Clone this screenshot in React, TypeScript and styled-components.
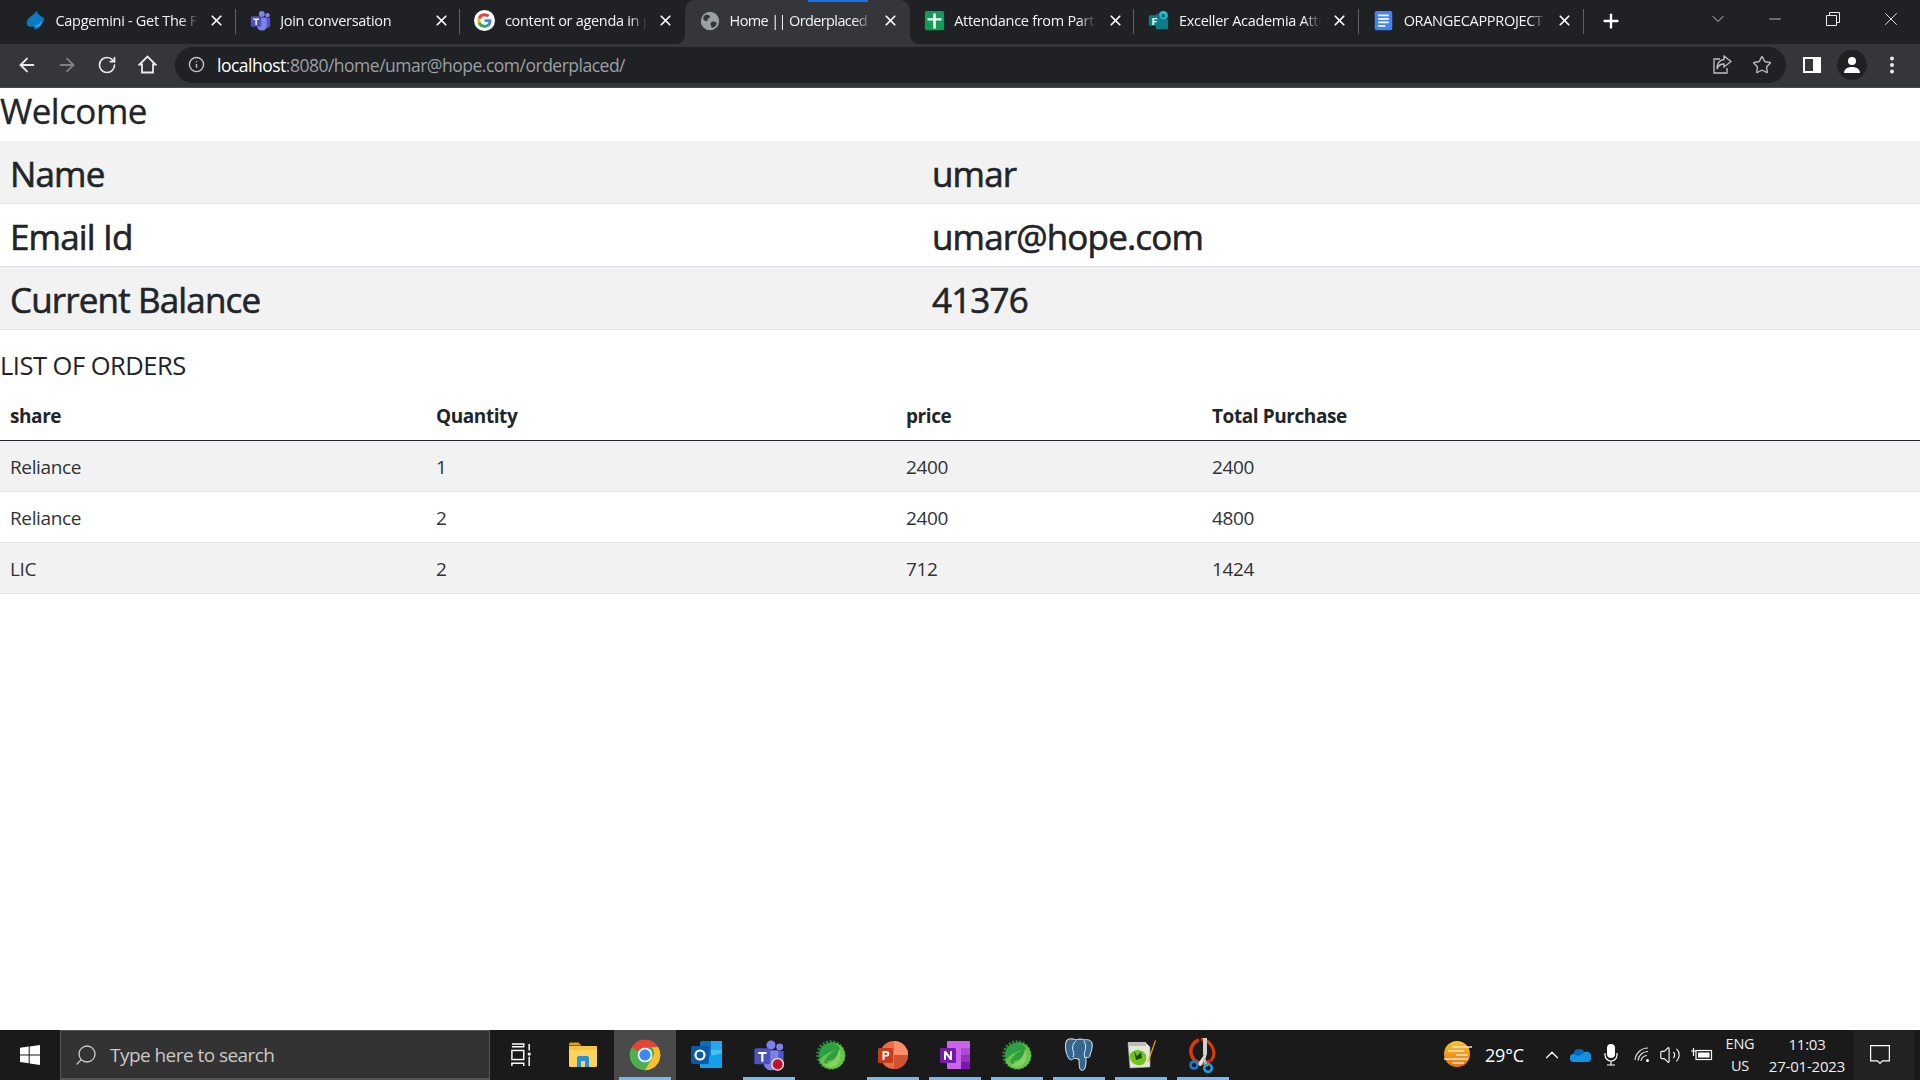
import React from 'react';
import styled, { createGlobalStyle } from 'styled-components';
import { ArrowLeft, ArrowRight, RotateCw, Info, Star, ChevronDown, ChevronUp, Minus, X, Plus, Search, Volume2 } from 'lucide-react';

const Global = createGlobalStyle`
  html, body { margin: 0; padding: 0; height: 100%; background: #fff; overflow: hidden; }
  #root { height: 100%; }
  * { box-sizing: border-box; }
`;
const FONT = `"Open Sans", "Noto Sans", "Liberation Sans", sans-serif`;

const Page = styled.div`
  width: 1920px; height: 1080px; display: flex; flex-direction: column;
  font-family: ${FONT}; color: #212529; background: #fff; overflow: hidden;
`;
const TabStrip = styled.div`
  height: 44px; background: #202124; display: flex; align-items: stretch; padding-left: 11px; position: relative;
`;
const Tab = styled.div<{ $active?: boolean; $sep?: boolean }>`
  width: 224.7px; flex: none; height: 44px; position: relative; display: flex; align-items: center;
  padding: 0 0 3px 14px; color: #e8eaed; border-radius: 10px 10px 0 0;
  background: ${p => (p.$active ? '#35363a' : 'transparent')};
  &::after {
    content: ''; display: ${p => (p.$sep ? 'block' : 'none')}; position: absolute; right: 0; top: 9px; width: 1px; height: 25px; background: #5f6368;
  }
`;
const Flare = styled.span<{ $side: 'left' | 'right' }>`
  position: absolute; bottom: 0; width: 10px; height: 10px;
  ${p => (p.$side === 'left' ? 'left: -10px;' : 'right: -10px;')}
  background: radial-gradient(circle at ${p => (p.$side === 'left' ? '0 0' : '100% 0')}, transparent 10px, #35363a 10.5px);
`;
const Favicon = styled.span`
  width: 21px; height: 21px; flex: none; display: flex; align-items: center; justify-content: center;
`;
const TabTitle = styled.span<{ $tight?: boolean }>`
  margin-left: 9.5px; width: 142px; font-size: 14.5px; letter-spacing: ${p => (p.$tight ? '-0.62px' : '-0.3px')}; white-space: nowrap; overflow: hidden; color: #f1f3f4;
  -webkit-mask-image: linear-gradient(90deg, #000 88%, transparent 100%);
  mask-image: linear-gradient(90deg, #000 88%, transparent 100%);
`;
const TabClose = styled.span`
  margin-left: 10.5px; display: flex; color: #fff;
`;
const LoadBar = styled.span`
  position: absolute; top: 0; left: 123px; width: 60px; height: 2px; background: #1a73e8;
`;
const NewTab = styled.span`
  margin-left: 16px; padding-bottom: 3px; display: flex; align-items: center; color: #fff;
`;
const WinControls = styled.div`
  margin-left: auto; display: flex; align-items: flex-start; color: #e8eaed;
`;
const WinButton = styled.span<{ $w: number }>`
  width: ${p => p.$w}px; height: 38px; display: flex; align-items: center; justify-content: center;
`;
const Toolbar = styled.div`
  height: 44px; background: #35363a; display: flex; align-items: center; padding: 0 0 2px 7px; color: #e8eaed; border-bottom: 1px solid #4a4b4f;
`;
const NavButton = styled.span<{ $dim?: boolean }>`
  width: 40px; height: 36px; flex: none; display: flex; align-items: center; justify-content: center;
  color: ${p => (p.$dim ? '#7f8185' : '#e8eaed')};
`;
const Omnibox = styled.div`
  margin-left: 8px; width: 1611px; flex: none; height: 36px; border-radius: 18px; background: #202124; display: flex; align-items: center; padding-left: 13px;
`;
const Url = styled.div`
  margin-left: 12px; font-size: 17.5px; letter-spacing: -0.5px; color: #9aa0a6; white-space: nowrap;
  b { font-weight: 400; color: #fff; }
`;
const OmniRight = styled.div`
  margin-left: auto; display: flex; align-items: center; gap: 20px; padding-right: 14px; color: #bdc1c6;
`;
const ToolRight = styled.div`
  display: flex; align-items: center; margin-left: 6px;
`;
const Avatar = styled.span`
  width: 30px; height: 30px; border-radius: 50%; background: #202124; display: flex; align-items: center; justify-content: center;
`;
const Content = styled.main`
  flex: 1; min-height: 0;
`;
const Welcome = styled.h2`
  margin: 0; height: 53px; font-size: 35px; font-weight: 400; line-height: 46px; letter-spacing: -0.55px; -webkit-text-stroke: 0.3px #212529;
`;
const Table = styled.table`
  width: 100%; border-collapse: separate; border-spacing: 0; table-layout: fixed;
`;
const Row = styled.tr<{ $striped?: boolean }>`
  background: ${p => (p.$striped ? '#f2f2f2' : '#fff')};
`;
const BigCell = styled.td`
  height: 63px; padding: 2px 10px 0; font-size: 35px; font-weight: 400; letter-spacing: -0.85px; line-height: 1; vertical-align: middle;
  border-bottom: 1px solid #dee2e6; -webkit-text-stroke: 0.6px #212529;
`;
const ListTitle = styled.h4`
  margin: 0; height: 62px; padding-top: 18px; font-size: 25.5px; font-weight: 400; line-height: 34px; letter-spacing: -0.5px;
`;
const Th = styled.th<{ $w?: number }>`
  height: 49px; padding: 0 10px; text-align: left; font-size: 19px; font-weight: 700; letter-spacing: -0.42px;
  width: ${p => (p.$w ? `${p.$w}px` : 'auto')}; border-bottom: 1px solid #212529;
`;
const Td = styled.td`
  height: 51px; padding: 2px 10px 0; font-size: 19px; letter-spacing: -0.38px; font-weight: 400; color: #2f3336;
  border-bottom: 1px solid #dee2e6;
`;
const Taskbar = styled.footer`
  height: 50px; flex: none; background: #1a1a1a; display: flex; align-items: stretch; color: #fff;
`;
const StartButton = styled.span`
  width: 60px; display: flex; align-items: center; justify-content: center;
`;
const SearchBox = styled.div`
  width: 430px; background: #333; border: 1px solid #555; border-bottom-width: 2px; display: flex; align-items: center; padding-left: 13px; color: #ccc;
`;
const SearchText = styled.span`
  margin-left: 12px; font-size: 19px; letter-spacing: -0.55px; color: #c8c8c8;
`;
const TaskSlot = styled.span<{ $active?: boolean; $run?: boolean }>`
  width: 62px; flex: none; position: relative; display: flex; align-items: center; justify-content: center;
  background: ${p => (p.$active ? '#4a4a4a' : 'transparent')};
  &::after {
    content: ''; display: ${p => (p.$run ? 'block' : 'none')}; position: absolute; bottom: 0; left: 5px; right: 5px; height: 3px; background: #76b9ed;
  }
`;
const Tray = styled.div`
  margin-left: auto; display: flex; align-items: center;
`;
const Temp = styled.span`
  margin-left: 11px; font-size: 18px; letter-spacing: -0.2px; width: 49px; color: #fff;
`;
const TrayIcon = styled.span<{ $w: number }>`
  width: ${p => p.$w}px; display: flex; justify-content: center; align-items: center; color: #fff;
`;
const Lang = styled.div`
  width: 40px; text-align: center; font-size: 14.5px; line-height: 22px; letter-spacing: -0.2px; color: #eee;
`;
const Clock = styled.div`
  width: 94px; text-align: center; font-size: 15px; line-height: 22px; letter-spacing: -0.2px; color: #eee;
`;
const Notify = styled.span`
  width: 60px; height: 50px; background: #222; display: flex; align-items: center; justify-content: center; padding-right: 8px;
`;
const Edge = styled.span`
  width: 6px; border-left: 1px solid #555;
`;

const ICapgemini = () => (
  <svg width="21" height="21" viewBox="0 0 24 24">
    <path d="M13 1C10 6 3 8 2 14c-.5 4 3 6 7 5 2-.5 2 1 1 3 3 0 5-1 7-3 3-3 5-8 5-10-3-1-7-4-9-8z" fill="#0b7ac0" />
    <path d="M10 18c3 0 7-2 9-6 1 3-1 6-4 7-2 .5-4 .3-5-1z" fill="#2ea6dc" />
  </svg>
);
const ITeams = ({ s = 21, badge = false }: { s?: number; badge?: boolean }) => (
  <svg width={s} height={s} viewBox="0 0 24 24">
    <circle cx="20" cy="6" r="2.6" fill="#7b83eb" />
    <circle cx="13.5" cy="4.5" r="3.4" fill="#7b83eb" />
    <path d="M16 9h7v8c0 2-2 3.5-3.5 3.5S16 19 16 17z" fill="#5059c9" />
    <path d="M8 8.5h11v10c0 3-2.5 5-5.500 5S8 21 8 18z" fill="#7b83eb" />
    <rect x="1" y="7" width="12" height="12" rx="1.5" fill="#4b53bc" />
    <path d="M3.800 9.800h6.400v1.500H7.800V17H6.200v-5.700H3.800z" fill="#fff" />
    {badge && <circle cx="18.500" cy="19" r="4.300" fill="#c50f2b" stroke="#eee" strokeWidth="1" />}
  </svg>
);
const IGoogle = () => (
  <svg width="21" height="21" viewBox="0 0 24 24">
    <circle cx="12" cy="12" r="12" fill="#fff" />
    <path d="M20 12.200c0-.6-.05-1.100-.15-1.600H12v3.100h4.500a3.900 3.900 0 0 1-1.650 2.500v2.100h2.700c1.550-1.450 2.450-3.550 2.450-6.100z" fill="#4285f4" />
    <path d="M12 20.300c2.250 0 4.150-.75 5.550-2l-2.700-2.100c-.75.5-1.700.8-2.850.8-2.200 0-4-1.450-4.700-3.450H4.500v2.150A8.300 8.300 0 0 0 12 20.300z" fill="#34a853" />
    <path d="M7.300 13.550a5 5 0 0 1 0-3.150v-2.100H4.500a8.300 8.300 0 0 0 0 7.400z" fill="#fbbc05" />
    <path d="M12 7c1.250 0 2.350.45 3.250 1.300l2.400-2.400C16.150 4.500 14.250 3.700 12 3.700a8.300 8.300 0 0 0-7.500 4.600l2.800 2.150C8 8.450 9.800 7 12 7z" fill="#ea4335" />
  </svg>
);
const IGlobe = () => (
  <svg width="20" height="20" viewBox="0 0 24 24">
    <circle cx="12" cy="12" r="11" fill="#9aa0a6" />
    <path d="M6 5c3-1 6 0 6 2s-3 1.500-3 4-4 1-5-1c-.5-2 .5-4 2-5zM14 13c3-1 6 0 6 2s-3 5-5 5-1-2-2-3 0-3 1-4z" fill="#35363a" />
  </svg>
);
const ISheets = () => (
  <svg width="21" height="21" viewBox="0 0 24 24">
    <rect x="1" y="1" width="22" height="22" rx="2" fill="#0f9d58" />
    <path d="M10.500 4h3v5.500H20v2.500h-6.500V21h-3v-9H4V9.500h6.500z" fill="#fff" />
  </svg>
);
const IForms = () => (
  <svg width="21" height="21" viewBox="0 0 24 24">
    <circle cx="17.500" cy="6" r="5" fill="#37c6d0" />
    <rect x="9" y="4" width="14" height="9" fill="#28a8ea" opacity=".4" />
    <rect x="9" y="11" width="14" height="11" rx="1" fill="#0f7b83" />
    <rect x="1" y="6" width="13" height="12" rx="1.500" fill="#038387" />
    <path d="M5 9h5.500v1.700H7v1.800h3v1.600H7V17H5z" fill="#fff" />
    <circle cx="17.500" cy="6.500" r="2.500" fill="#0f7b83" />
  </svg>
);
const IDocs = () => (
  <svg width="21" height="21" viewBox="0 0 24 24">
    <rect x="2" y="1" width="20" height="22" rx="2" fill="#4285f4" />
    <path d="M6 7h12M6 11h12M6 15h12M6 19h8" stroke="#fff" strokeWidth="2" transform="translate(0 -1)" />
  </svg>
);
const IWindows = () => (
  <svg width="20" height="20" viewBox="0 0 20 20" fill="#fff">
    <path d="M0 2.800 8.700 1.600v7.800H0zM9.700 1.400 20 0v9.400H9.700zM0 10.400h8.700v7.900L0 17.100zM9.700 10.400H20V20L9.700 18.500z" />
  </svg>
);
const ITaskView = () => (
  <svg width="20" height="24" viewBox="0 0 22 26" fill="none" stroke="#fff" strokeWidth="1.600">
    <path d="M1 1h13v3H1M1 25v-3h13v3" />
    <rect x="1" y="8" width="13" height="10" />
    <path d="M20 1v7M20 15v10" />
    <rect x="18.500" y="10.500" width="3" height="3" fill="#fff" stroke="none" />
  </svg>
);
const IExplorer = () => (
  <svg width="28" height="28" viewBox="0 0 28 28">
    <path d="M0 3a1.500 1.500 0 0 1 1.500-1.500h8l3 3H0z" fill="#e0a10e" />
    <rect x="0" y="5" width="28" height="21" rx="1.500" fill="#fcd35c" />
    <rect x="0" y="5" width="28" height="4" fill="#f6c344" />
    <path d="M8 26v-9a2 2 0 0 1 2-2h8a2 2 0 0 1 2 2v9h-4v-6h-4v6z" fill="#2a8fd8" />
  </svg>
);
const IChrome = () => (
  <svg width="32" height="32" viewBox="0 0 48 48">
    <circle cx="24" cy="24" r="23" fill="#4caf50" />
    <path d="M24 1a23 23 0 0 1 19.900 11.500H24a11.500 11.500 0 0 0-10 5.800L4.100 12.500A23 23 0 0 1 24 1z" fill="#ea4335" />
    <path d="M43.900 12.500A23 23 0 0 1 24 47l10-17.300a11.500 11.500 0 0 0 0-17.200z" fill="#fbc02d" />
    <circle cx="24" cy="24" r="11" fill="#fff" />
    <circle cx="24" cy="24" r="8.500" fill="#4285f4" />
  </svg>
);
const IOutlook = () => (
  <svg width="32" height="30" viewBox="0 0 32 30">
    <rect x="9" y="1" width="22" height="27" rx="1.500" fill="#0f6cbd" />
    <rect x="20" y="1" width="11" height="9" fill="#28a8ea" />
    <rect x="9" y="10" width="11" height="9" fill="#0f78d4" />
    <rect x="20" y="10" width="11" height="9" fill="#50d9ff" opacity=".8" />
    <path d="M9 19l22-6v15H9z" fill="#14a0e8" />
    <rect x="0" y="6" width="18" height="18" rx="2" fill="#0a5aa8" />
    <circle cx="9" cy="15" r="4.500" fill="none" stroke="#fff" strokeWidth="2.200" />
  </svg>
);
const ISpring = () => (
  <svg width="30" height="32" viewBox="0 0 30 32">
    <circle cx="15" cy="16" r="13" fill="none" stroke="#1f8a36" strokeWidth="3.500" strokeDasharray="2 1.500" />
    <path d="M15 3.500C23 3 29 9 29 16.500S23 30 15.500 30C9 30 5 26 3 21z" fill="#6cc24a" />
    <path d="M15 3.500C8 4 3 9 3 16.500c0 2 .3 3 1 4.500 4-6 12-9 16-10-6 3-10 7-12 12 3 3 7 5 10 4-3-1-6-3-7-5 8 0 12-6 13-13-2-3-6-6-9-5.500z" fill="#2ca043" />
    <path d="M9 25c5-1 12-3 14-15 3 7 1 17-7 18-3 .5-5-1-7-3z" fill="#86d35e" />
  </svg>
);
const IPpt = () => (
  <svg width="30" height="30" viewBox="0 0 30 30">
    <circle cx="16" cy="15" r="14" fill="#ed6c47" />
    <path d="M16 1a14 14 0 0 1 14 14H16z" fill="#ff8f6b" />
    <path d="M16 15h14a14 14 0 0 1-14 14z" fill="#d35230" />
    <rect x="0" y="8" width="15" height="15" rx="1.500" fill="#c43e1c" />
    <path d="M4.500 11H8.500a2.800 2.800 0 0 1 0 5.600H6.500V20h-2zM6.500 12.700v2.200h1.700a1.100 1.100 0 0 0 0-2.200z" fill="#fff" />
  </svg>
);
const IOneNote = () => (
  <svg width="30" height="30" viewBox="0 0 30 30">
    <rect x="7" y="1" width="23" height="28" rx="1" fill="#ca64ea" />
    <rect x="21" y="8" width="9" height="7" fill="#ae4bd5" />
    <rect x="21" y="15" width="9" height="7" fill="#9332bf" />
    <rect x="21" y="22" width="9" height="7" fill="#7719aa" />
    <rect x="0" y="8" width="16" height="15" rx="1.500" fill="#7719aa" />
    <path d="M4 11h2l4 5.500V11h2v9h-2l-4-5.500V20H4z" fill="#fff" />
  </svg>
);
const IPostgres = () => (
  <svg width="30" height="34" viewBox="0 0 30 34">
    <path d="M3 2c3-2 7-1 9 0 2-1 6-1.500 8 0 3-1 7 0 8 3 1 4-1 9-2 12 0 3-2 3-4 2 0 3 0 9-1 11-1 3-4 3-5 1-1-3-1-7-1-10-3 0-5-1-5-1-2 3-5 2-6-1C2 15 0 7 3 2z" fill="#336791" stroke="#e8eef3" strokeWidth="1" />
    <path d="M12 3c-3 2-4 6-3 10 1 2 1 4 0 6M20 3c2 3 2 7 1 10-1 2-1 4 0 7" stroke="#e8eef3" strokeWidth="1" fill="none" />
  </svg>
);
const INotepad = () => (
  <svg width="30" height="32" viewBox="0 0 30 32">
    <path d="M2 4h18l4 4v20l-20 1z" fill="#e4e8d8" stroke="#9aa" strokeWidth=".6" />
    <rect x="2" y="3" width="18" height="4" fill="#bcbcbc" />
    <path d="M4 15c3-4 8-5 12-3s5 5 4 9-4 6-9 5-8-6-7-11z" fill="#74c41e" />
    <path d="M8 12l3 5 4-4 1 6-6 2z" fill="#1d4d12" />
    <path d="M29 1l-7 20-1 2 2-1 7-20z" fill="#e8a21c" />
  </svg>
);
const ISnip = () => (
  <svg width="28" height="36" viewBox="0 0 28 36">
    <path d="M10 3a12 12 0 1 0 11 21" fill="none" stroke="#d83b01" strokeWidth="3.500" />
    <path d="M12 2c4 0 12 4 13 14 0 4-2 6-3 8" fill="none" stroke="#d83b01" strokeWidth="3" />
    <path d="M14 1h4v16l-2 5-2-5z" fill="#d0d0d0" />
    <path d="M8 28 15 18l2 2-5 9z" fill="#e6e6e6" />
    <path d="M16 20l3 9-3 1-2-8z" fill="#bbb" />
    <circle cx="5" cy="28" r="3.500" fill="none" stroke="#0f7fd8" strokeWidth="2.600" />
    <circle cx="19" cy="31" r="3.800" fill="none" stroke="#1ba1e2" strokeWidth="2.600" />
  </svg>
);
const IWeather = () => (
  <svg width="32" height="28" viewBox="0 0 32 28">
    <defs>
      <linearGradient id="sun" x1="0" y1="0" x2="0" y2="1">
        <stop offset="0" stopColor="#fcc52c" />
        <stop offset="1" stopColor="#e8710c" />
      </linearGradient>
    </defs>
    <circle cx="15" cy="13" r="13" fill="url(#sun)" />
    <path d="M10 6h20M6 10h16M14 14h12M2 18h24M10 22h12" stroke="#e8e4d0" strokeWidth="1.600" />
  </svg>
);
const IOneDrive = () => (
  <svg width="22" height="14" viewBox="0 0 22 14">
    <path d="M4 14a4 4 0 0 1-.5-8A6 6 0 0 1 14.500 4 4.500 4.500 0 0 1 21 9a4 4 0 0 1-3 5z" fill="#1490df" />
    <path d="M3.500 6A6 6 0 0 1 14.500 4L9 8z" fill="#0364b8" />
  </svg>
);
const IMic = () => (
  <svg width="14" height="22" viewBox="0 0 14 22" fill="none" stroke="#fff" strokeWidth="1.200">
    <rect x="3" y="0" width="8" height="14" rx="4" fill="#fff" stroke="none" />
    <path d="M1 9v2a6 6 0 0 0 12 0V9M7 17v4M3 21h8" />
  </svg>
);
const IWifi = () => (
  <svg width="18" height="18" viewBox="0 0 18 18" fill="none" stroke="#ddd" strokeWidth="1.200">
    <path d="M1 14A13 13 0 0 1 14 2M4 14.500A10 10 0 0 1 14 5.500M7 15a6.500 6.500 0 0 1 6-5.500" />
    <circle cx="13.500" cy="14.500" r="1.500" fill="#fff" stroke="none" />
  </svg>
);
const IBattery = () => (
  <svg width="22" height="14" viewBox="0 0 22 14" fill="none" stroke="#fff" strokeWidth="1.200">
    <rect x="5" y="2.500" width="15.500" height="9" />
    <rect x="7" y="4.500" width="11.500" height="5" fill="#fff" stroke="none" />
    <path d="M0 3h5M2.500 0v8" />
  </svg>
);
const INotify = () => (
  <svg width="20" height="20" viewBox="0 0 20 20" fill="none" stroke="#fff" strokeWidth="1.200">
    <path d="M.6.6h18.800v15.300H12.500L10 18.500l-2.500-2.600H.6z" />
  </svg>
);
const IShare = () => (
  <svg width="19" height="19" viewBox="0 0 19 19" fill="none" stroke="#bdc1c6" strokeWidth="1.300">
    <path d="M7 4H1v14h13v-5" />
    <path d="M11 1l7 5.500-7 5.500V9C7 9 5 11 4 14c0-5 2-9 7-9.500z" />
  </svg>
);
const IPanel = () => (
  <svg width="18" height="16" viewBox="0 0 18 16">
    <path d="M0 0h18v16H0z" fill="#fff" />
    <rect x="2" y="2" width="8" height="12" fill="#35363a" />
  </svg>
);
const IUser = () => (
  <svg width="18" height="18" viewBox="0 0 18 18" fill="#fff">
    <circle cx="9" cy="5" r="4" />
    <path d="M1 17c0-4 3.500-6 8-6s8 2 8 6z" />
  </svg>
);
const IDots = () => (
  <svg width="6" height="18" viewBox="0 0 6 18" fill="#e8eaed">
    <circle cx="3" cy="2.500" r="2" /><circle cx="3" cy="9" r="2" /><circle cx="3" cy="15.500" r="2" />
  </svg>
);
const IHome = () => (
  <svg width="19" height="19" viewBox="0 0 19 19" fill="none" stroke="#e8eaed" strokeWidth="1.800">
    <path d="M1.500 9.500 9.500 1.500l8 8h-2.500v8H4v-8z" />
  </svg>
);

const tabs = [
  { icon: <ICapgemini />, title: 'Capgemini - Get The Future You Want', sep: true },
  { icon: <ITeams />, title: 'Join conversation', sep: true },
  { icon: <IGoogle />, title: 'content or agenda in project', sep: false },
  { icon: <IGlobe />, title: 'Home || Orderplaced', active: true },
  { icon: <ISheets />, title: 'Attendance from Participants', sep: true },
  { icon: <IForms />, title: 'Exceller Academia Attendance', sep: true },
  { icon: <IDocs />, title: 'ORANGECAPPROJECT - Google', sep: true },
];
const info = [['Name', 'umar'], ['Email Id', 'umar@hope.com'], ['Current Balance', '41376']];
const orders = [['Reliance', '1', '2400', '2400'], ['Reliance', '2', '2400', '4800'], ['LIC', '2', '712', '1424']];
const apps = [
  { icon: <IExplorer /> },
  { icon: <IChrome />, active: true, run: true },
  { icon: <IOutlook /> },
  { icon: <ITeams s={32} badge />, run: true },
  { icon: <ISpring /> },
  { icon: <IPpt />, run: true },
  { icon: <IOneNote />, run: true },
  { icon: <ISpring />, run: true },
  { icon: <IPostgres />, run: true },
  { icon: <INotepad />, run: true },
  { icon: <ISnip />, run: true },
];

export default function App() {
  return (
    <Page>
      <Global />
      <TabStrip>
        {tabs.map(t => (
          <Tab key={t.title} $active={t.active} $sep={t.sep}>
            {t.active && <><Flare $side="left" /><Flare $side="right" /><LoadBar /></>}
            <Favicon>{t.icon}</Favicon>
            <TabTitle $tight={t.active}>{t.title}</TabTitle>
            <TabClose><X size={17} strokeWidth={2.4} /></TabClose>
          </Tab>
        ))}
        <NewTab><Plus size={22} strokeWidth={2.6} /></NewTab>
        <WinControls>
          <WinButton $w={56}><ChevronDown size={20} strokeWidth={1} /></WinButton>
          <WinButton $w={58}><Minus size={18} strokeWidth={1} /></WinButton>
          <WinButton $w={58}>
            <svg width="14" height="14" viewBox="0 0 14 14" fill="none" stroke="#e8eaed"><path d="M.5 3.500h10v10H.5zM3.500 3.500v-3h10v10h-3" /></svg>
          </WinButton>
          <WinButton $w={58}><X size={22} strokeWidth={1} /></WinButton>
        </WinControls>
      </TabStrip>
      <Toolbar>
        <NavButton><ArrowLeft size={22} strokeWidth={2} /></NavButton>
        <NavButton $dim><ArrowRight size={22} strokeWidth={2} /></NavButton>
        <NavButton><RotateCw size={20} strokeWidth={2} /></NavButton>
        <NavButton><IHome /></NavButton>
        <Omnibox>
          <Info size={17} color="#bdc1c6" />
          <Url><b>localhost</b>:8080/home/umar@hope.com/orderplaced/</Url>
          <OmniRight>
            <IShare />
            <Star size={20} strokeWidth={1.6} />
          </OmniRight>
        </Omnibox>
        <ToolRight>
          <NavButton><IPanel /></NavButton>
          <NavButton><Avatar><IUser /></Avatar></NavButton>
          <NavButton><IDots /></NavButton>
        </ToolRight>
      </Toolbar>
      <Content>
        <Welcome>Welcome</Welcome>
        <Table>
          <colgroup><col width="922" /></colgroup>
          <tbody>
            {info.map(([k, v], i) => (
              <Row key={k} $striped={i % 2 === 0}>
                <BigCell>{k}</BigCell>
                <BigCell>{v}</BigCell>
              </Row>
            ))}
          </tbody>
        </Table>
        <ListTitle>LIST OF ORDERS</ListTitle>
        <Table>
          <thead>
            <tr>
              <Th $w={426}>share</Th>
              <Th $w={470}>Quantity</Th>
              <Th $w={306}>price</Th>
              <Th>Total Purchase</Th>
            </tr>
          </thead>
          <tbody>
            {orders.map((o, i) => (
              <Row key={i} $striped={i % 2 === 0}>
                {o.map((c, j) => <Td key={j}>{c}</Td>)}
              </Row>
            ))}
          </tbody>
        </Table>
      </Content>
      <Taskbar>
        <StartButton><IWindows /></StartButton>
        <SearchBox>
          <Search size={24} strokeWidth={1.3} style={{ transform: 'scaleX(-1)' }} />
          <SearchText>Type here to search</SearchText>
        </SearchBox>
        <TaskSlot><ITaskView /></TaskSlot>
        {apps.map((a, i) => (
          <TaskSlot key={i} $active={a.active} $run={a.run}>{a.icon}</TaskSlot>
        ))}
        <Tray>
          <IWeather />
          <Temp>29°C</Temp>
          <TrayIcon $w={36}><ChevronUp size={22} strokeWidth={1.3} /></TrayIcon>
          <TrayIcon $w={22}><IOneDrive /></TrayIcon>
          <TrayIcon $w={38}><IMic /></TrayIcon>
          <TrayIcon $w={26}><IWifi /></TrayIcon>
          <TrayIcon $w={28}><Volume2 size={22} strokeWidth={1.2} /></TrayIcon>
          <TrayIcon $w={36}><IBattery /></TrayIcon>
          <Lang>ENG<br />US</Lang>
          <Clock>11:03<br />27-01-2023</Clock>
          <Notify><INotify /></Notify>
          <Edge />
        </Tray>
      </Taskbar>
    </Page>
  );
}
